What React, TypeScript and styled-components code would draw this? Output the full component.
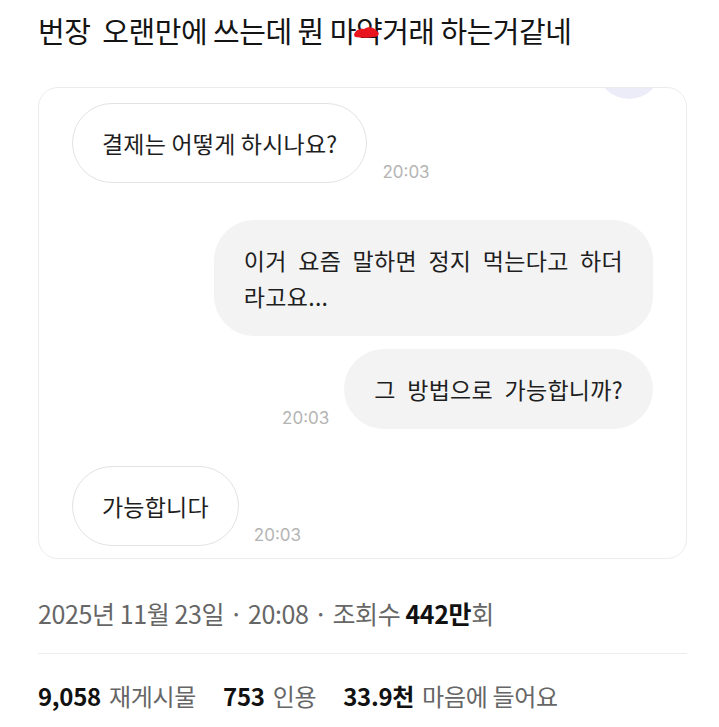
import styled, { createGlobalStyle } from "styled-components";

// 기본 페이지 스타일
const GlobalStyle = createGlobalStyle`
  html, body {
    margin: 0;
    padding: 0;
    background: #ffffff;
  }
  body {
    font-family: "Noto Sans CJK KR", "Noto Sans", sans-serif;
    color: #111;
  }
`;

const Page = styled.div`
  width: 719px;
  padding: 10px 32px 0 38px;
  box-sizing: border-box;
`;

const Title = styled.h1`
  margin: 0;
  font-size: 29px;
  font-weight: 400;
  line-height: 40px;
  color: #141414;
  letter-spacing: -0.5px;
  white-space: nowrap;
`;

// 빨간 낙서로 가려진 글자
const Censored = styled.span`
  position: relative;
  display: inline-block;
`;

const Scribble = styled.svg`
  position: absolute;
  left: -3px;
  top: 16px;
  width: 28px;
  height: 12px;
`;

const Card = styled.div`
  position: relative;
  margin-top: 37px;
  border: 1px solid #ececec;
  border-radius: 20px;
  overflow: hidden;
  padding: 15px 33px 12px 33px;
  display: flex;
  flex-direction: column;
`;

const Avatar = styled.div`
  position: absolute;
  top: -53px;
  right: 25px;
  width: 64px;
  height: 64px;
  border-radius: 50%;
  background: #ececf8;
`;

const Row = styled.div<{ $mine?: boolean; $gap: number }>`
  display: flex;
  align-items: flex-end;
  justify-content: ${(p) => (p.$mine ? "flex-end" : "flex-start")};
  gap: 15px;
  margin-top: ${(p) => p.$gap}px;
`;

const Bubble = styled.div<{ $mine?: boolean }>`
  font-size: 23px;
  line-height: 36px;
  color: #1e1e1e;
  padding: 21px 29px 21px 29px;
  border-radius: 40px;
  background: ${(p) => (p.$mine ? "#f3f3f3" : "#ffffff")};
  border: 1px solid ${(p) => (p.$mine ? "#f3f3f3" : "#e2e2e2")};
  word-spacing: ${(p) => (p.$mine ? "6px" : "0")};
  letter-spacing: ${(p) => (p.$mine ? "0.3px" : "0.2px")};
  white-space: nowrap;
`;

const Time = styled.span`
  font-family: "Inter", "Noto Sans", sans-serif;
  font-size: 17px;
  line-height: 20px;
  color: #b4b4b4;
  margin-bottom: 1px;
`;

const Meta = styled.div`
  margin-top: 37px;
  font-size: 25px;
  line-height: 34px;
  color: #666;
  letter-spacing: -0.4px;
`;

const Strong = styled.b`
  font-weight: 700;
  color: #111;
`;

const Divider = styled.hr`
  margin: 23px 0 0 0;
  border: none;
  border-top: 1px solid #ececec;
`;

const Stats = styled.div`
  margin-top: 25px;
  display: flex;
  gap: 27px;
  font-size: 24px;
  line-height: 34px;
  letter-spacing: -0.3px;
`;

const Stat = styled.span`
  color: #666;
  & b {
    color: #111;
    font-weight: 700;
    margin-right: 8px;
  }
`;

export default function App() {
  return (
    <>
      <GlobalStyle />
      <Page>
        <Title>
          번장&nbsp; 오랜만에 쓰는데 뭔 마
          <Censored>
            약
            <Scribble viewBox="0 0 28 12">
              <path
                d="M1 9 C2 4, 7 2, 11 3 C15 0, 21 1, 24 5 C27 7, 26 11, 21 11 C16 12, 8 12, 2 11 Z"
                fill="#e8141e"
              />
            </Scribble>
          </Censored>
          거래 하는거같네
        </Title>

        <Card>
          <Avatar />
          <Row $gap={0}>
            <Bubble>결제는 어떻게 하시나요?</Bubble>
            <Time>20:03</Time>
          </Row>
          <Row $mine $gap={37}>
            <Bubble $mine>
              이거 요즘 말하면 정지 먹는다고 하더
              <br />
              라고요...
            </Bubble>
          </Row>
          <Row $mine $gap={13}>
            <Time>20:03</Time>
            <Bubble $mine>그 방법으로 가능합니까?</Bubble>
          </Row>
          <Row $gap={37}>
            <Bubble>가능합니다</Bubble>
            <Time>20:03</Time>
          </Row>
        </Card>

        <Meta>
          2025년 11월 23일 · 20:08 · 조회수 <Strong>442만</Strong>회
        </Meta>
        <Divider />
        <Stats>
          <Stat>
            <b>9,058</b>재게시물
          </Stat>
          <Stat>
            <b>753</b>인용
          </Stat>
          <Stat>
            <b>33.9천</b>마음에 들어요
          </Stat>
        </Stats>
      </Page>
    </>
  );
}
